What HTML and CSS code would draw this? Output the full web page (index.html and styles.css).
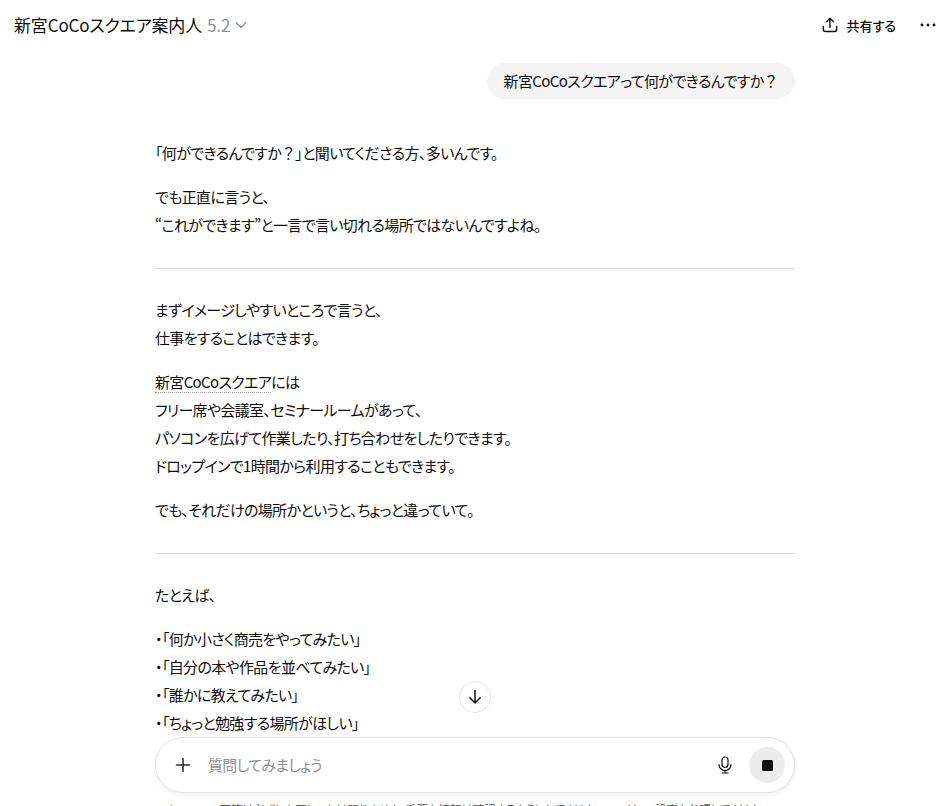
FILE: index.html
```html
<!DOCTYPE html>
<html lang="ja">
<head>
<meta charset="utf-8">
<title>新宮CoCoスクエア案内人</title>
<link rel="stylesheet" href="styles.css">
</head>
<body>
<div class="app">
  <header class="topbar">
    <div class="model"><span class="model-name">新宮CoCoスクエア案内人</span> <span class="model-ver">5.2</span>
      <svg class="chev" width="12" height="12" viewBox="0 0 12 12"><path d="M1.5 4l4.5 4.5L10.500 4" fill="none" stroke="#8f8f8f" stroke-width="1.300" stroke-linecap="round" stroke-linejoin="round"/></svg>
    </div>
    <div class="actions">
      <button class="share">
        <svg width="16" height="16" viewBox="0 0 16 16"><path d="M8 10.500V1.500M4.800 4.500L8 1.300l3.200 3.200M1.300 9.500v3a2 2 0 0 0 2 2h9.400a2 2 0 0 0 2-2v-3" fill="none" stroke="#0d0d0d" stroke-width="1.400" stroke-linecap="round" stroke-linejoin="round"/></svg>
        <span>共有する</span>
      </button>
      <svg class="more" width="16" height="4" viewBox="0 0 16 4"><circle cx="2" cy="2" r="1.400" fill="#0d0d0d"/><circle cx="8" cy="2" r="1.400" fill="#0d0d0d"/><circle cx="14" cy="2" r="1.400" fill="#0d0d0d"/></svg>
    </div>
  </header>
  <main class="thread">
    <div class="column">
      <div class="user-row"><div class="bubble"><span>新宮CoCoスクエアって何ができるんですか<span class="fw">？</span></span></div></div>
      <article class="answer">
        <p>「何ができるんですか<span class="fw">？</span>」と聞いてくださる方、多いんです。</p>
        <p>でも正直に言うと、<br>“これができます”と一言で言い切れる場所ではないんですよね。</p>
        <hr>
        <p>まずイメージしやすいところで言うと、<br>仕事をすることはできます。</p>
        <p><span class="entity">新宮CoCoスクエア</span>には<br>フリー席や会議室、セミナールームがあって、<br>パソコンを広げて作業したり、打ち合わせをしたりできます。<br>ドロップインで1時間から利用することもできます。</p>
        <p>でも、それだけの場所かというと、ちょっと違っていて。</p>
        <hr>
        <p>たとえば、</p>
        <p>・「何か小さく商売をやってみたい」<br>・「自分の本や作品を並べてみたい」<br>・「誰かに教えてみたい」<br>・「ちょっと勉強する場所がほしい」</p>
      </article>
    </div>
  </main>
  <button class="to-bottom" aria-label="下へ">
    <svg width="16" height="16" viewBox="0 0 16 16"><path d="M8 1.500v12.500M2.800 8.800L8 14l5.200-5.200" fill="none" stroke="#0d0d0d" stroke-width="1.500" stroke-linecap="round" stroke-linejoin="round"/></svg>
  </button>
  <footer class="bottom">
    <div class="composer">
      <svg class="plus" width="16" height="16" viewBox="0 0 16 16"><path d="M8 1.500v13M1.500 8h13" stroke="#303030" stroke-width="1.600" stroke-linecap="round"/></svg>
      <span class="placeholder">質問してみましょう</span>
      <svg class="mic" width="14" height="18" viewBox="0 0 14 18"><rect x="4" y="1" width="6" height="10.500" rx="3" fill="none" stroke="#0d0d0d" stroke-width="1.200"/><path d="M1 8.500a6 6 0 0 0 12 0M7 14.500v2.500M4 17h6" fill="none" stroke="#0d0d0d" stroke-width="1.200" stroke-linecap="round"/></svg>
      <button class="stop" aria-label="停止"><span class="stop-square"></span></button>
    </div>
    <div class="disclaimer">ChatGPT の回答は必ずしも正しいとは限りません。重要な情報は確認するようにしてください。cookie の設定を参照してください。</div>
  </footer>
</div>
</body>
</html>
```

FILE: styles.css
```css
* { box-sizing: border-box; }
html, body { margin: 0; height: 100%; overflow: hidden; background: #fff; }
body { font-family: "Noto Sans CJK JP", "Noto Sans", sans-serif; color: #0d0d0d; font-feature-settings: "palt" 1; }
button { font: inherit; color: inherit; background: none; border: 0; padding: 0; }
.fw { font-feature-settings: "palt" 0; }
.app { position: relative; width: 937px; height: 806px; overflow: hidden; display: flex; flex-direction: column; }
.topbar { height: 50px; flex: none; display: flex; align-items: center; justify-content: space-between; padding: 0 0 0 14px; margin-bottom: 2px; }
.model { display: flex; align-items: center; gap: 5px; font-size: 17px; line-height: 24px; letter-spacing: -.15px; }
.model-ver { color: #8f8f8f; }
.chev { margin-left: 0; }
.actions { display: flex; align-items: center; gap: 24px; padding-right: 1px; }
.share { display: flex; align-items: center; gap: 9px; font-size: 13px; font-weight: 500; }
.thread { flex: 1; min-height: 0; overflow: hidden; }
.column { width: 640px; margin-left: 155px; }
.user-row { display: flex; justify-content: flex-end; padding-top: 11px; }
.bubble { background: #f4f4f4; border-radius: 18px; height: 36px; padding: 0 17px 2px; display: flex; align-items: center; font-size: 15px; letter-spacing: -.6px; }
.answer { padding-top: 40px; font-size: 15px; line-height: 28px; letter-spacing: -.65px; }
.answer p { margin: 0 0 16px; }
.answer hr { border: 0; border-top: 1px solid #dedede; margin: 29px 0 27px; }
.entity { border-bottom: 1px dotted #9b9b9b; }
.to-bottom { position: absolute; left: 459px; top: 681px; width: 32px; height: 32px; border-radius: 50%; background: #fff; border: 1px solid #e5e5e5; display: flex; align-items: center; justify-content: center; }
.bottom { position: absolute; left: 0; right: 0; top: 737px; height: 69px; background: #fff; }
.composer { margin-left: 155px; width: 640px; height: 56px; border: 1px solid #e3e3e3; border-radius: 28px; background: #fff; box-shadow: 0 2px 6px rgba(0,0,0,.07); display: flex; align-items: center; padding: 0 9px 0 19px; }
.plus { flex: none; }
.placeholder { margin-left: 17px; flex: 1; font-size: 15px; color: #8f8f8f; letter-spacing: -.7px; padding-bottom: 2px; }
.mic { flex: none; margin-right: 17px; }
.stop { width: 36px; height: 36px; border-radius: 50%; background: #ececec; display: flex; align-items: center; justify-content: center; }
.stop-square { width: 11px; height: 11px; border-radius: 1.500px; background: #0d0d0d; }
.disclaimer { font-size: 12px; line-height: 16px; color: #5d5d5d; text-align: center; margin-top: 9px; letter-spacing: -.7px; }
```
